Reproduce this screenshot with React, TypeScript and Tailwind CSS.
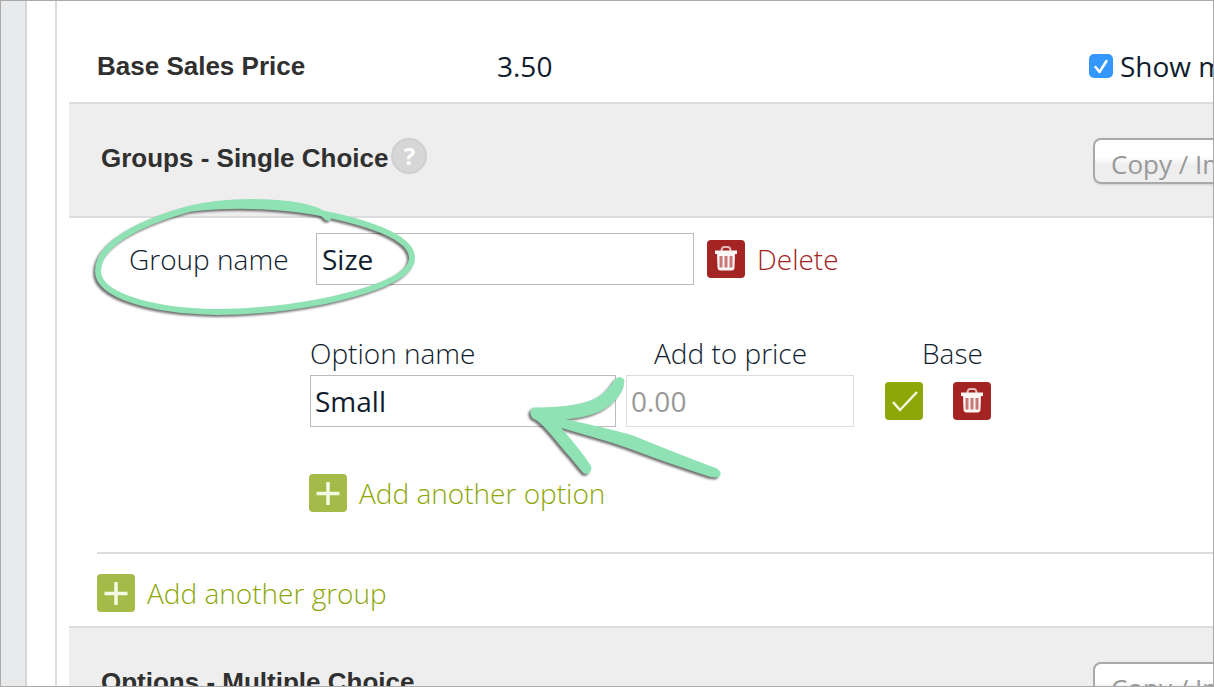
import type { ReactNode } from 'react';

const sans = "font-['Open_Sans','Noto_Sans',sans-serif]";
const heading = "font-['Liberation_Sans',Arial,sans-serif] text-[26px] leading-8 font-bold text-[#303030]";

function PlusIcon() {
  return (
    <svg viewBox="0 0 38 38" className="size-[38px] shrink-0" aria-hidden="true">
      <rect width="38" height="38" rx="4" fill="#a5bb49" />
      <path d="M19 8v23M7.500 19.500h23" stroke="#f6f9e4" strokeWidth="3.500" />
    </svg>
  );
}

function TrashIcon() {
  return (
    <svg viewBox="0 0 38 38" className="size-[38px] shrink-0" aria-hidden="true">
      <rect width="38" height="38" rx="4" fill="#a32422" />
      <path d="M14.500 11q0-4 3-4h3q3 0 3 4" fill="none" stroke="#e3bab8" strokeWidth="2" />
      <path d="M8 10.500h22v3.500H8z" fill="#fbf5f4" />
      <path d="M10 14h18l-.5 13q0 3.500-3 3.500h-11q-3 0-3-3.500z" fill="#fbf5f4" />
      <path d="M14 16v11.500M19 16v11.500M24 16v11.500" stroke="#c67976" strokeWidth="3" />
    </svg>
  );
}

function CheckIcon() {
  return (
    <svg viewBox="0 0 38 38" className="size-[38px] shrink-0" aria-hidden="true">
      <rect width="38" height="38" rx="4" fill="#8da708" />
      <path d="M8 20l7 8 17-18" fill="none" stroke="#f4f7df" strokeWidth="2.500" />
    </svg>
  );
}

function HelpButton() {
  return (
    <button
      type="button"
      aria-label="Help"
      className="mb-1 flex size-9 items-center justify-center rounded-full border-2 border-[#cfcfcf] bg-[#d6d6d6] text-2xl leading-none font-bold text-white"
    >
      ?
    </button>
  );
}

function SectionHeader({ title, children }: { title: string; children?: ReactNode }) {
  return (
    <div className="flex h-[116px] items-center justify-between border-y-2 border-[#dddddd] bg-[#eeeeee] pl-8">
      <div className="flex items-center gap-[3px] pb-1">
        <h2 className={heading}>{title}</h2>
        {children}
      </div>
      <div className="w-[120px] overflow-hidden pt-1 pb-1 whitespace-nowrap">
        <button
          type="button"
          className="mt-[2px] block h-[46px] rounded-lg border-2 border-[#a9a9a9] bg-linear-to-b from-white from-40% to-[#eeeeee] to-60% px-4 pt-1.5 text-[26px] leading-9 text-[#999999] shadow-sm"
        >
          Copy / Im
        </button>
      </div>
    </div>
  );
}

// Hand-drawn marker strokes over the form
function Annotations() {
  return (
    <svg
      className="pointer-events-none absolute top-0 left-0 drop-shadow-[-2px_2px_1px_rgba(0,0,0,0.55)]"
      width="760"
      height="500"
      viewBox="1 1 760 500"
      aria-hidden="true"
    >
      <path
        d="M188 209C237 203 290 206 330 215C380 226 411 240 412 257C413 277 371 291 325 301C285 309 247 312 217 312C153 311 98 296 98 271C98 244 139 223 189 209C235 198 310 200 327 217"
        fill="none"
        stroke="#8fe2b4"
        strokeWidth="6"
        strokeLinejoin="round"
      />
      <path d="M323 211L332 216L330 221L325 220Z" fill="#8fe2b4" />
      <path
        d="M533 408C551 408 569 407 584 403C600 399 608 391 615 380Q620 375 624 380Q624 388 620 393C610 410 591 417 563 419C584 424 609 429 633 436C662 448 690 459 717 469Q723 474 718 477Q713 477 709 476C682 467 655 458 629 448C607 440 583 434 560 427C570 439 582 452 591 467Q591 475 584 473C578 467 573 459 566 452C555 439 547 428 537 420Q531 418 531 414Q530 410 533 408Z"
        fill="#8fe2b4"
        stroke="#8fe2b4"
        strokeLinejoin="round"
      />
    </svg>
  );
}

export default function App() {
  return (
    <div className={`${sans} relative flex h-screen overflow-hidden border border-[#aaaaaa] bg-white text-[28px] leading-10 text-[#101c2e]`}>
      <div className="w-[26px] shrink-0 border-r-2 border-[#d5d6d8] bg-[#e9eaec]" />
      <div className="w-[30px] shrink-0 border-r-2 border-[#dddddd]" />

      <main className="min-w-0 flex-1 pl-3">
        <div className="flex h-[101px] items-center justify-between pt-7 pl-7">
          <div className="flex items-center">
            <h2 className={`${heading} w-[400px]`}>Base Sales Price</h2>
            <span>3.50</span>
          </div>
          <div className="w-[124px] overflow-hidden whitespace-nowrap">
            <label className="flex items-center gap-[7px]">
              <span className="relative flex size-6 shrink-0">
                <input type="checkbox" defaultChecked className="size-6 appearance-none rounded-[5px] bg-[#3397fd]" />
                <svg viewBox="0 0 24 24" className="pointer-events-none absolute inset-0" aria-hidden="true">
                  <path d="M6.500 13l4 5L17.500 7" fill="none" stroke="white" strokeWidth="2.500" strokeLinecap="round" strokeLinejoin="round" />
                </svg>
              </span>
              Show m
            </label>
          </div>
        </div>

        <SectionHeader title="Groups - Single Choice">
          <HelpButton />
        </SectionHeader>

        <div className="flex items-center pt-[15px] pl-[60px] font-light">
          <label htmlFor="group-name" className="w-[187px]">Group name</label>
          <input
            id="group-name"
            defaultValue="Size"
            className="h-[52px] w-[378px] border border-[#bbbbbb] bg-white px-[5px] font-normal"
          />
          <button type="button" className="ml-[13px] flex items-center gap-3 text-[#a32422]">
            <TrashIcon />
            Delete
          </button>
        </div>

        <div className="pt-12 pl-[241px] font-light">
          <div className="grid grid-cols-[306px_228px_106px] gap-x-2.5 pb-[2px]">
            <label htmlFor="option-name">Option name</label>
            <label htmlFor="option-price" className="pl-7">Add to price</label>
            <span className="pl-[58px]">Base</span>
          </div>
          <div className="flex items-center gap-2.5">
            <input
              id="option-name"
              defaultValue="Small"
              className="h-[52px] w-[306px] border border-[#bbbbbb] bg-white px-1 font-normal"
            />
            <input
              id="option-price"
              placeholder="0.00"
              className="h-[52px] w-[228px] border border-[#dddddd] bg-white px-1 font-normal placeholder:text-[#999999]"
            />
            <div className="ml-[21px] flex gap-[30px]">
              <button type="button" aria-label="Base option"><CheckIcon /></button>
              <button type="button" aria-label="Delete option"><TrashIcon /></button>
            </div>
          </div>
        </div>

        <div className="pt-[46px] pl-60 font-light">
          <button type="button" className="flex items-center gap-3 text-[#8da708]">
            <PlusIcon />
            Add another option
          </button>
        </div>

        <div className="mt-[39px] ml-7 border-t-2 border-[#dddddd] pt-[19px] pb-[13px] font-light">
          <button type="button" className="flex items-center gap-3 text-[#8da708]">
            <PlusIcon />
            Add another group
          </button>
        </div>

        <SectionHeader title="Options - Multiple Choice" />
      </main>

      <Annotations />
    </div>
  );
}
